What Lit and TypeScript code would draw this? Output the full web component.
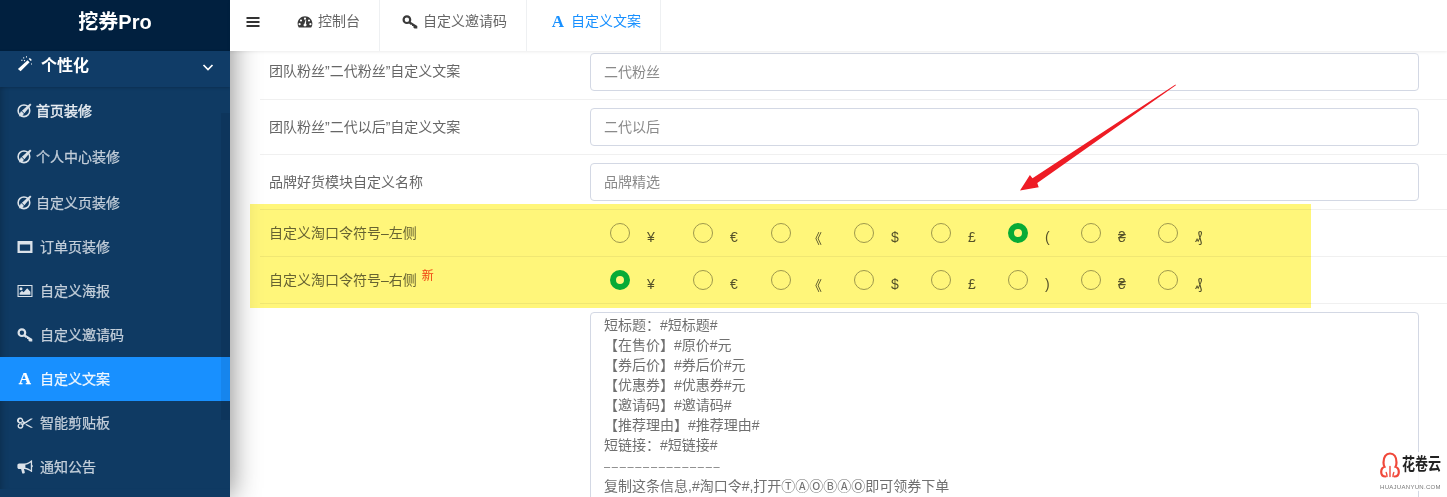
import { LitElement, html, css, svg } from "lit";
import { customElement } from "lit/decorators.js";

const ICONS: Record<string, any> = {
  bars: svg`<path d="M1.5 3h13v2h-13zM1.5 7h13v2h-13zM1.5 11h13v2h-13z"/>`,
  gauge: svg`<path fill-rule="evenodd" d="M8 2.2C3.9 2.2.6 5.500.6 9.600c0 1.500.4 2.900 1.200 4h12.400c.8-1.100 1.200-2.500 1.200-4 0-4.100-3.300-7.400-7.400-7.400zM8 3.600a1.100 1.100 0 1 1 0 2.200 1.100 1.100 0 0 1 0-2.200zM4 5.400a1.100 1.100 0 1 1 0 2.200 1.100 1.100 0 0 1 0-2.200zM2.600 9.100a1.100 1.100 0 1 1 0 2.200 1.100 1.100 0 0 1 0-2.200zM13.400 9.100a1.100 1.100 0 1 1 0 2.200 1.100 1.100 0 0 1 0-2.200zM12 5.400a1.100 1.100 0 1 1 0 2.200 1.100 1.100 0 0 1 0-2.200zM8 12.400c-.9 0-1.500-.6-1.500-1.400 0-.6.4-1.100.9-1.300L8.600 6h.6L9 9.800c.4.3.6.7.6 1.200 0 .8-.7 1.400-1.600 1.400z"/>`,
  key: svg`<circle cx="4.900" cy="5.700" r="3.300" fill="none" stroke="currentColor" stroke-width="2.200"/><path d="M7.300 7.100l8 5v2.300h-2.700l-1.200-1v-1.300H10v-1.400H8.500L6.500 9z"/>`,
  wand: svg`<path d="M10.600 4.200l2 2L3.600 15.200.9 12.900zM11.700 3.100l1.200-1.200 2 2-1.200 1.200z"/><path d="M6.200 1.200h1v1.300h-1zM9 .2h1v1.200H9zM4.200 3.800h1.300v1H4.200zM14 7.400h1v1.200h-1zM6.700 4.600l.8-.8.8.8-.8.8z"/>`,
  theme: svg`<circle cx="7.400" cy="8.300" r="6.200" fill="none" stroke="currentColor" stroke-width="1.700"/><path d="M14 .6l1.400 1.300-7.500 8.900-2.700-2.500z"/><path d="M4.700 8.900l2.500 2.400c-.3 2.200-2.500 3.300-5.300 2.700 1.300-.9 1-2.100 1.400-3.200.3-1 .7-1.700 1.400-1.900z"/>`,
  win: svg`<path fill-rule="evenodd" d="M.5 2h15v12H.5zM2.800 5.400v6.400h10.400V5.400z"/>`,
  pic: svg`<path fill-rule="evenodd" d="M.5 2h15v12H.5zM1.600 3.100v9.800h12.800V3.100z"/><path d="M4 4.200a1.500 1.500 0 1 1 0 3 1.500 1.500 0 0 1 0-3zM2.600 11.800V9.900L5 7.800l1.600 1.500 3.600-4.100 3.200 3.500v3.100z"/>`,
  scissors: svg`<path fill-rule="evenodd" d="M3.400 2.600a2.900 2.900 0 0 1 2.800 3.500L8 7.100l5.800-3.700h1.700v.6L6.200 9.900a2.900 2.900 0 1 1-1-1.300l1.200-.7-1.200-.7a2.900 2.900 0 1 1-1.800-4.600zM3.400 4a1.500 1.500 0 1 0 0 3 1.500 1.500 0 0 0 0-3zM3.400 9.200a1.500 1.500 0 1 0 0 3 1.500 1.500 0 0 0 0-3z"/><path d="M9.500 9l6 3.200v.6h-1.700L8.200 9.700z"/>`,
  horn: svg`<path fill-rule="evenodd" d="M14.400 1.200h.7V6c.5.2.8.6.8 1.100s-.3 1-.8 1.200v4.700h-.7c-1.600-1.300-3.800-2.600-6.600-3H7l.9 3.600-.8.9H5.300l-1.200-4.500H2.200c-1 0-1.800-.8-1.800-1.800V6.400c0-1 .8-1.800 1.800-1.800h5c3 0 5.300-1.700 7.200-3.400zM13.800 3.500c-1.700 1.200-3.400 2.100-5.400 2.300v3c2 .3 3.700 1.100 5.400 2.300z"/>`,
};

function icon(name: string) {
  return html`<svg class="ico" viewBox="0 0 16 16" fill="currentColor" aria-hidden="true">${ICONS[name]}</svg>`;
}

const MENU = [
  { i: "theme", t: "首页装修", k: "deco first" },
  { i: "theme", t: "个人中心装修", k: "deco" },
  { i: "theme", t: "自定义页装修", k: "deco" },
  { i: "win", t: "订单页装修", k: "" },
  { i: "pic", t: "自定义海报", k: "" },
  { i: "key", t: "自定义邀请码", k: "" },
  { i: "A", t: "自定义文案", k: "active" },
  { i: "scissors", t: "智能剪贴板", k: "" },
  { i: "horn", t: "通知公告", k: "" },
];

const SYMBOLS = ["¥", "€", "《", "$", "£", "(", "₴", "₰"];
const WIDTHS = [83, 78, 83, 77, 77, 73, 77, 60];

const BEFORE = `短标题\uFF1A#短标题#
【在售价】#原价#元
【券后价】#券后价#元
【优惠券】#优惠券#元
【邀请码】#邀请码#
【推荐理由】#推荐理由#
短链接\uFF1A#短链接#
`;
const DASHES = "–".repeat(15);
const AFTER = `
复制这条信息,#淘口令#,打开ⓉⒶⓄⒷⒶⓄ即可领券下单`;

@customElement("app-root")
export class AppRoot extends LitElement {
  static styles = css`
    :host {
      display: block;
      width: 1447px;
      height: 497px;
      overflow: hidden;
      position: relative;
      background: #fff;
      font-family: "Liberation Sans", "Noto Sans CJK SC", sans-serif;
      font-size: 14px;
      color: #666;
    }
    .page { display: flex; height: 497px; }
    .ico { width: 16px; height: 16px; flex: none; display: block; }

    .side {
      width: 230px;
      flex: none;
      position: relative;
      z-index: 3;
      background: #0f3a63;
      box-shadow: 2px 0 26px rgba(0, 0, 0, 0.45);
      overflow: hidden;
    }
    .logo {
      height: 51px;
      background: #01203f;
      color: #fff;
      font-size: 20px;
      font-weight: 700;
      display: flex;
      align-items: center;
      justify-content: center;
      padding-bottom: 10px;
      box-sizing: border-box;
    }
    .parent {
      height: 36px;
      background: #103c67;
      color: #fff;
      display: flex;
      align-items: center;
      padding: 0 15px 10px 17px;
      box-sizing: border-box;
      font-size: 16px;
      font-weight: 700;
      gap: 8px;
      position: relative;
      box-shadow: 0 1px 3px rgba(0, 0, 0, 0.18);
    }
    .parent .chev { margin-left: auto; width: 14px; height: 14px; margin-top: 6px; }
    .sub {
      box-shadow: inset 8px 0 8px -8px rgba(0, 0, 0, 0.3);
      position: relative;
    }
    .item {
      height: 44px;
      display: flex;
      align-items: center;
      padding-left: 17px;
      gap: 7px;
      color: #c4cfda;
      -webkit-text-stroke: 0.25px currentColor;
    }
    .item span { padding-bottom: 3px; }
    .item.deco span { padding-bottom: 1px; }
    .item .ico { color: #dbe2e9; }
    .item.deco { height: 46px; gap: 4px; }
    .item.deco .ico { width: 15px; height: 15px; }
    .item.first { color: #e8edf2; -webkit-text-stroke: 0.4px currentColor; }
    .item.active { background: #1890ff; color: #eef7ff; }
    .item .fa-a, .fa-a {
      width: 16px;
      text-align: center;
      font-family: "Liberation Serif", serif;
      font-weight: 700;
      font-size: 17px;
      line-height: 16px;
      flex: none;
      color: #fff;
      padding: 0;
    }
    .thumb {
      position: absolute;
      left: 221px;
      top: 113px;
      width: 9px;
      height: 307px;
      background: rgba(0, 0, 0, 0.07);
    }

    .main { flex: 1; min-width: 0; display: flex; flex-direction: column; }
    .top {
      height: 51px;
      flex: none;
      background: #fff;
      display: flex;
      align-items: stretch;
      position: relative;
      z-index: 4;
      box-shadow: 0 1px 3px rgba(0, 0, 0, 0.08);
      color: #666;
    }
    .toggle {
      width: 67px;
      color: #333;
      padding-left: 15px;
      box-sizing: border-box;
      display: flex;
      align-items: center;
      padding-bottom: 8px;
    }
    .tab {
      display: flex;
      align-items: center;
      gap: 5px;
      padding: 0 19px 8px 0;
      box-sizing: border-box;
      border-right: 1px solid #eef0f2;
    }
    .tab span { padding-bottom: 4px; }
    .tab .ico { color: #3a3a3a; }
    .tab + .tab { padding-left: 22px; }
    .tab.active { color: #1890ff; padding-left: 23px; }
    .tab .fa-a { color: #1890ff; padding-bottom: 0; }

    .form { flex: 1; min-height: 0; overflow: hidden; padding-left: 30px; }
    .row {
      display: flex;
      align-items: center;
      border-bottom: 1px solid #f0f0f0;
      padding: 8px 28px 8px 9px;
      height: 55px;
      box-sizing: border-box;
    }
    .row.first { height: 49px; padding-top: 2px; }
    .row .lb { width: 321px; flex: none; padding-bottom: 2px; box-sizing: border-box; }
    .row.first .lb { padding-bottom: 4px; }
    .sup { color: #f0441e; font-size: 12px; position: relative; top: -5px; margin-left: 5px; }
    .row input {
      flex: 1;
      min-width: 0;
      height: 38px;
      box-sizing: border-box;
      border: 1px solid #d3d8e4;
      border-radius: 4px;
      padding: 0 13px;
      font: inherit;
      outline: none;
      background: transparent;
    }
    .row input::placeholder { color: #8a8a8a; opacity: 1; }
    .row.radio { height: 47px; padding: 0 28px 6px 9px; }
    .row.radio .lb { padding: 3px 0 0; }
    .radios { display: flex; padding-left: 20px; margin-top: 5px; }
    .opt { display: flex; align-items: center; flex: none; color: #555; font-size: 14px; }
    .dot {
      width: 20px;
      height: 20px;
      box-sizing: border-box;
      border-radius: 50%;
      border: 1px solid #9e9e9e;
      margin-right: 17px;
      flex: none;
    }
    .dot.on { border: 6px solid #07b170; }
    .sym { margin-top: 9px; }
    .row.last {
      display: flex;
      align-items: flex-start;
      height: auto;
      border: none;
    }
    .area {
      flex: 1;
      min-width: 0;
      margin-left: 321px;
      height: 240px;
      box-sizing: border-box;
      border: 1px solid #d3d8e4;
      border-radius: 4px;
      padding: 2px 13px;
      line-height: 20px;
      white-space: pre-wrap;
      color: #707070;
    }
    .dashes { font-size: 11px; letter-spacing: 1.7px; }

    .mark {
      position: absolute;
      left: 250px;
      top: 204px;
      width: 1061px;
      height: 104px;
      background: #fff67a;
      mix-blend-mode: multiply;
      z-index: 5;
      pointer-events: none;
    }
    .arrow { position: absolute; left: 1015px; top: 80px; z-index: 6; }
    .brand {
      position: absolute;
      left: 1380px;
      top: 452px;
      z-index: 7;
      display: grid;
      grid-template-columns: 20px auto;
      column-gap: 2px;
      width: 62px;
      color: #222;
      background: rgba(255, 255, 255, 0.85);
    }
    .brand svg { display: block; }
    .brand .name { font-size: 13px; font-weight: 700; line-height: 26px; white-space: nowrap; transform: scaleY(1.3); transform-origin: left center; }
    .brand .url { grid-column: 1 / 3; font-size: 6px; line-height: 8px; color: #777; letter-spacing: 0.3px; white-space: nowrap; margin-top: 5px; }
  `;

  render() {
    return html`
      <div class="page">
        <aside class="side">
          <div class="logo">挖券Pro</div>
          <div class="parent">
            ${icon("wand")}<span>个性化</span>
            <svg class="chev" viewBox="0 0 14 14" fill="none" stroke="currentColor" stroke-width="1.700"><path d="M2.500 5l4.500 4.500L11.500 5"/></svg>
          </div>
          <div class="sub">
            ${MENU.map(
              (m) => html`<div class="item ${m.k}">
                ${m.i === "A" ? html`<span class="fa-a">A</span>` : icon(m.i)}<span>${m.t}</span>
              </div>`
            )}
          </div>
          <div class="thumb"></div>
        </aside>
        <div class="main">
          <header class="top">
            <div class="toggle">${icon("bars")}</div>
            <div class="tab">${icon("gauge")}<span>控制台</span></div>
            <div class="tab">${icon("key")}<span>自定义邀请码</span></div>
            <div class="tab active"><span class="fa-a">A</span><span>自定义文案</span></div>
          </header>
          <div class="form">
            <div class="row first"><span class="lb">团队粉丝”二代粉丝”自定义文案</span><input placeholder="二代粉丝" /></div>
            <div class="row"><span class="lb">团队粉丝”二代以后”自定义文案</span><input placeholder="二代以后" /></div>
            <div class="row"><span class="lb">品牌好货模块自定义名称</span><input placeholder="品牌精选" /></div>
            ${this.radioRow(html`自定义淘口令符号–左侧`, 5, "(")}
            ${this.radioRow(html`自定义淘口令符号–右侧<span class="sup">新</span>`, 0, ")")}
            <div class="row last"><div class="area">${BEFORE}<span class="dashes">${DASHES}</span>${AFTER}</div></div>
          </div>
        </div>
      </div>
      <div class="mark"></div>
      <svg class="arrow" width="170" height="120" viewBox="1015 80 170 120" aria-hidden="true">
        <path fill="#ee1c25" d="M1175.500 84.400l.4.900-138.600 97.800 1.400 4.100-18.700 3.300 9.900-15.600 2.600 3.400z"/>
      </svg>
      <div class="brand">
        <svg width="20" height="26" viewBox="0 0 20 26" fill="none" stroke="#f0483a" stroke-width="2.200" stroke-linecap="round">
          <path d="M5.500 24.500C2.500 24.500 1.200 22.500 1.200 20c0-2.500 1.300-4.500 3.300-5.200-.7-1.300-1-2.800-1-4.300C3.500 5 6 1.500 10 1.500s6.500 3.500 6.500 9c0 1.500-.3 3-1 4.300 2 .7 3.300 2.700 3.300 5.200 0 2.500-1.300 4.500-4.300 4.500"/>
          <path d="M7 24.500c0-1.500-.3-3-.8-4M10 24.500V14.500M13 24.500c0-1.500.3-3 .8-4" stroke-width="1.400"/>
        </svg>
        <span class="name">花卷云</span>
        <span class="url">HUAJUANYUN.COM</span>
      </div>
    `;
  }

  radioRow(label: unknown, on: number, paren: string) {
    return html`<div class="row radio">
      <span class="lb">${label}</span>
      <div class="radios">
        ${SYMBOLS.map(
          (s, i) => html`<div class="opt" style="width:${WIDTHS[i]}px">
            <span class="dot ${i === on ? "on" : ""}"></span><span class="sym">${s === "(" ? paren : s}</span>
          </div>`
        )}
      </div>
    </div>`;
  }
}
